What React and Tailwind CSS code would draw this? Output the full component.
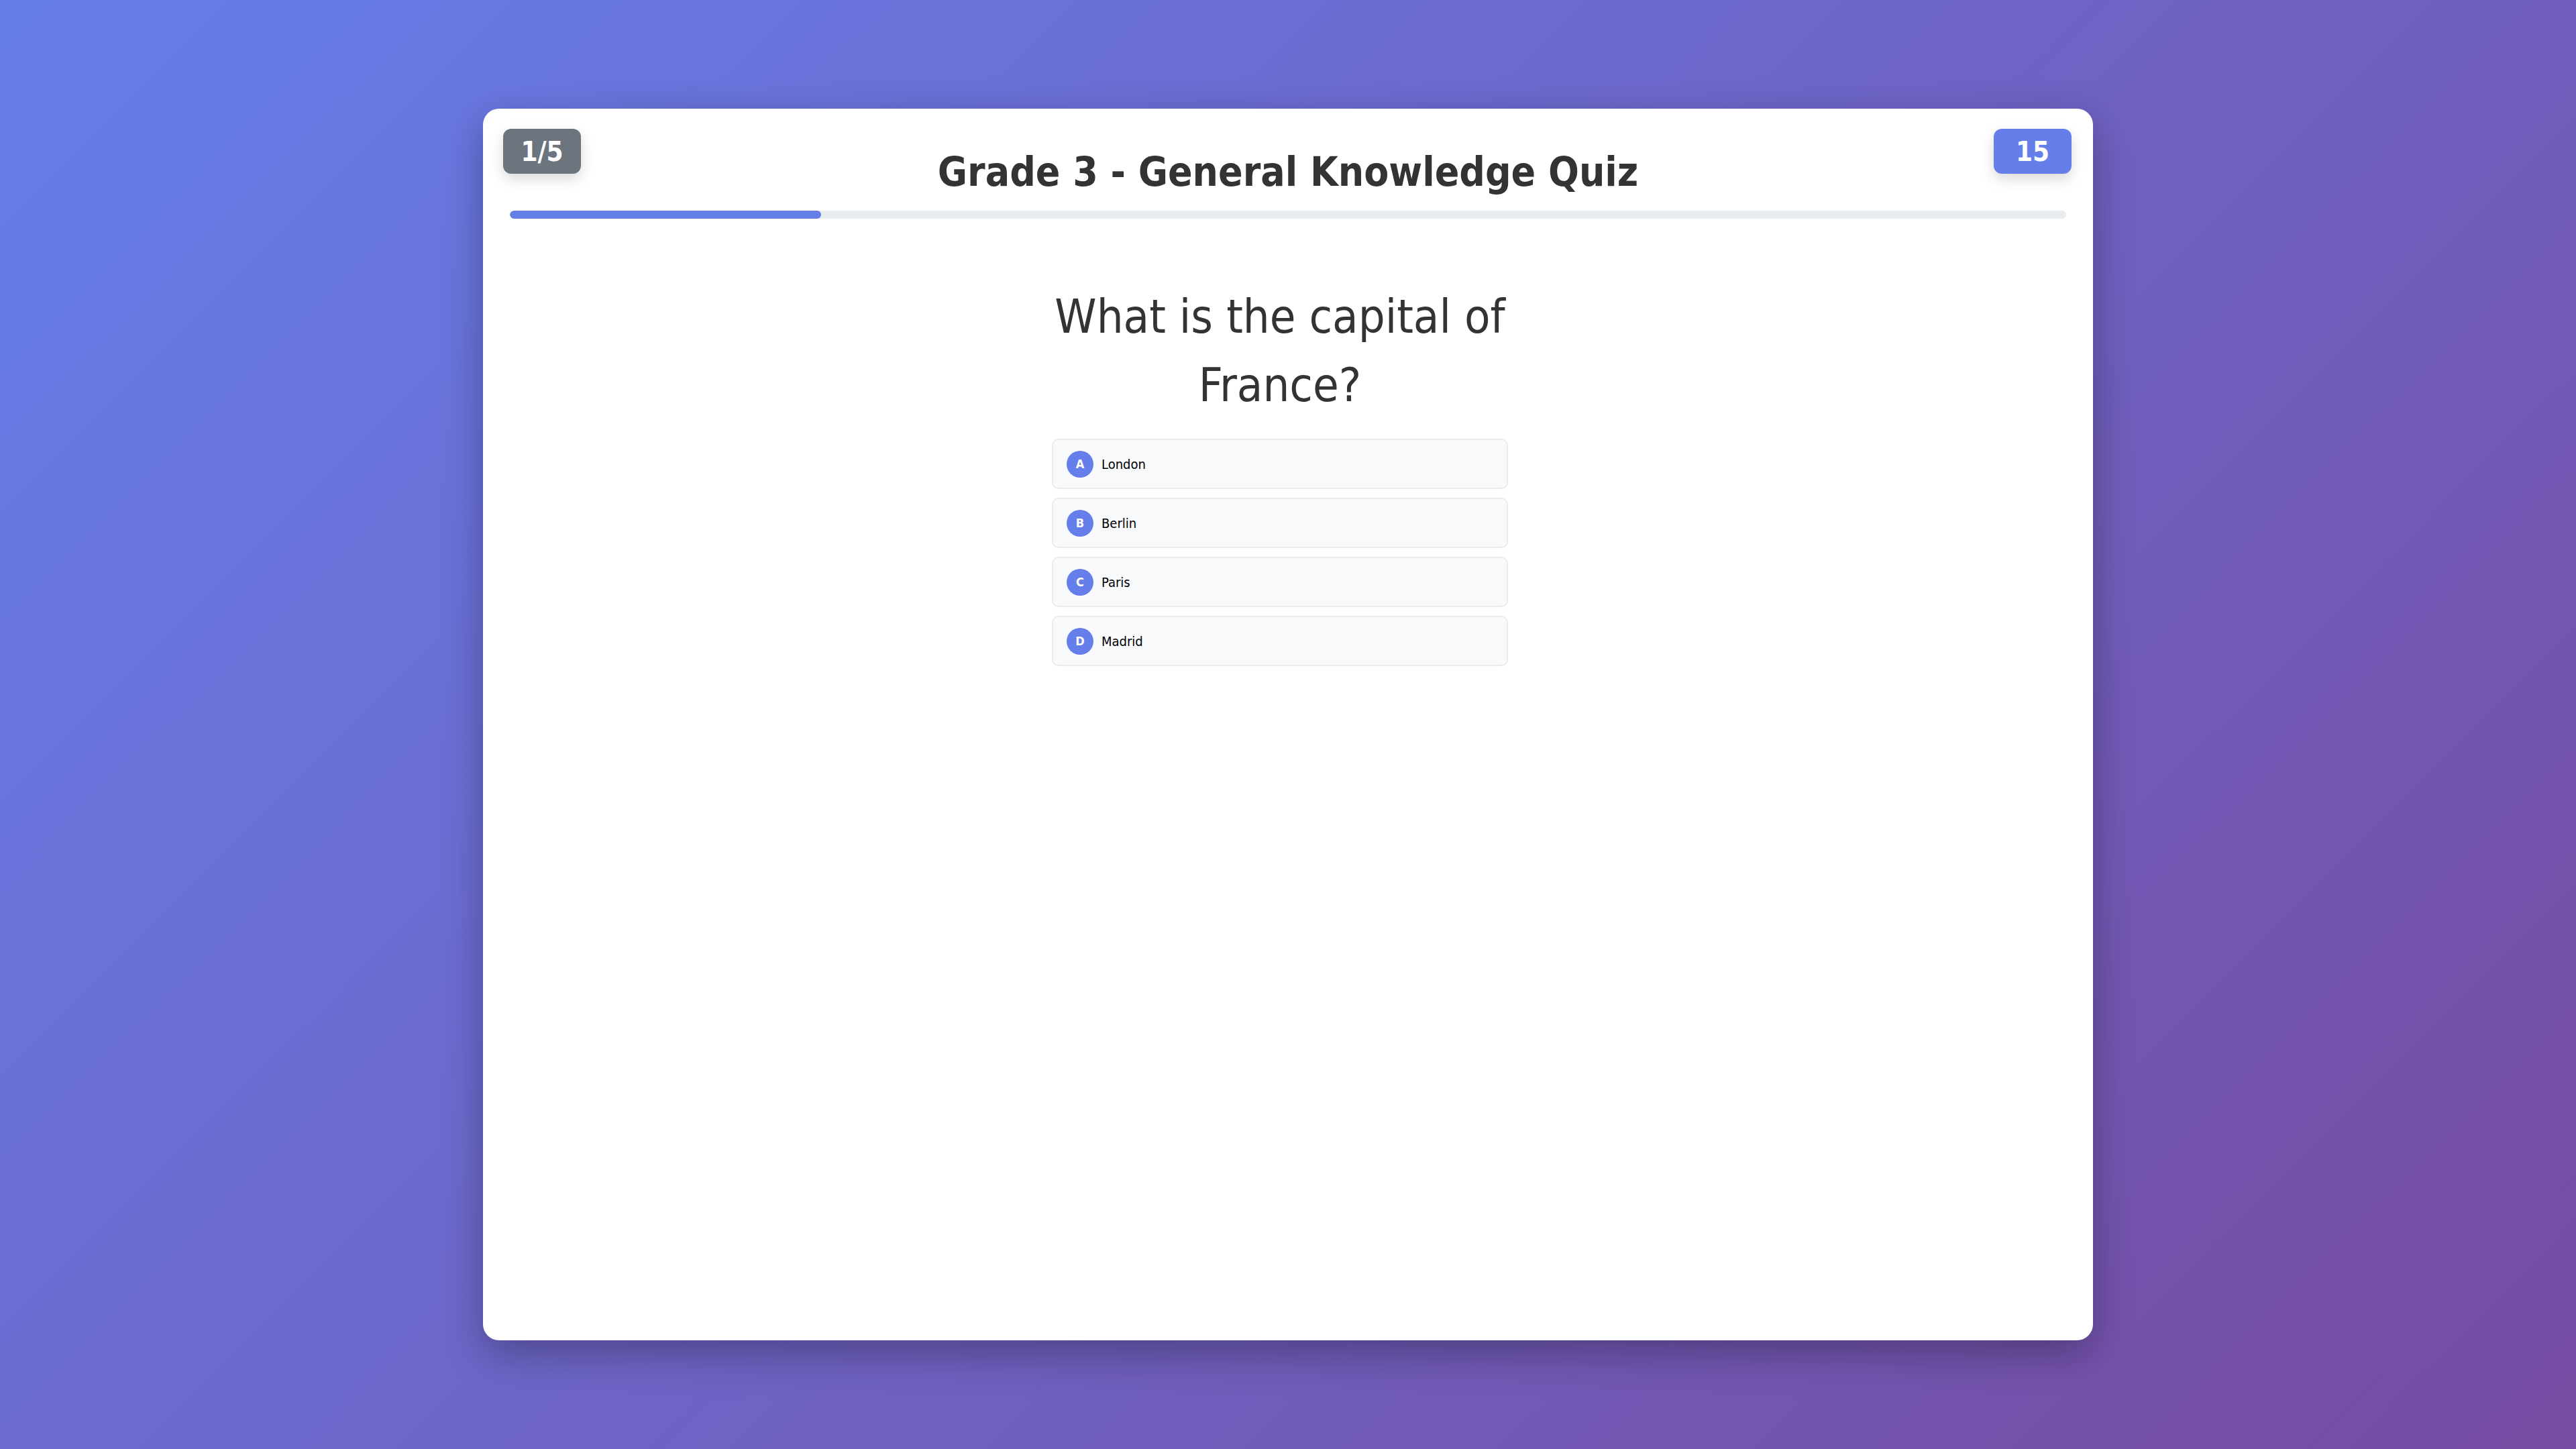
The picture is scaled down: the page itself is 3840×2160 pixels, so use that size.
const options = [
  { letter: "A", text: "London" },
  { letter: "B", text: "Berlin" },
  { letter: "C", text: "Paris" },
  { letter: "D", text: "Madrid" },
];

const App = () => {
  const current = 1;
  const total = 5;
  const progress = (current / total) * 100;

  return (
    <div className="min-h-screen w-full flex items-center justify-center bg-[linear-gradient(135deg,#667eea_0%,#764ba2_100%)] font-['DejaVu_Sans_Condensed','DejaVu_Sans',sans-serif] font-stretch-condensed">
      <div className="relative w-[2400px] h-[1836px] bg-white rounded-3xl shadow-[0_20px_60px_rgba(0,0,0,0.3)] px-[40px] pt-[57px]">
        {/* question counter */}
        <div className="absolute top-[30px] left-[30px] w-[116px] h-[67px] flex items-center justify-center rounded-xl bg-[#6c757d] text-white text-[40px] font-bold shadow-[0_8px_20px_rgba(0,0,0,0.15)]">
          {current}/{total}
        </div>

        {/* timer */}
        <div className="absolute top-[30px] right-[32px] w-[116px] h-[67px] flex items-center justify-center rounded-xl bg-[#667eea] text-white text-[40px] font-bold shadow-[0_8px_20px_rgba(0,0,0,0.15)]">
          15
        </div>

        {/* header */}
        <h1 className="text-center text-[60px] leading-[74px] font-bold text-[#333]">
          Grade 3 - General Knowledge Quiz
        </h1>

        {/* progress */}
        <div className="mt-[21px] h-[12px] w-full rounded-full bg-[#e9ecef] overflow-hidden">
          <div
            className="h-full rounded-full bg-[#667eea]"
            style={{ width: `${progress}%` }}
          ></div>
        </div>

        {/* question */}
        <div className="flex justify-center pr-[24px] mt-[96px]">
          <div className="w-[680px]">
            <h2 className="text-center text-[70px] leading-[1.45] font-normal text-[#333]">
              What is the capital of France?
            </h2>

            <div className="mt-[29px] flex flex-col gap-[13px]">
              {options.map((opt) => (
                <div
                  key={opt.letter}
                  className="flex items-center gap-[12px] h-[75px] px-[20px] bg-[#f8f9fa] border-2 border-[#e9ecef] rounded-[10px]"
                >
                  <span className="w-[40px] h-[40px] shrink-0 rounded-full bg-[#667eea] text-white flex items-center justify-center text-[18px] font-bold">
                    {opt.letter}
                  </span>
                  <span className="text-[20px] text-black">{opt.text}</span>
                </div>
              ))}
            </div>
          </div>
        </div>
      </div>
    </div>
  );
};

export default App;
